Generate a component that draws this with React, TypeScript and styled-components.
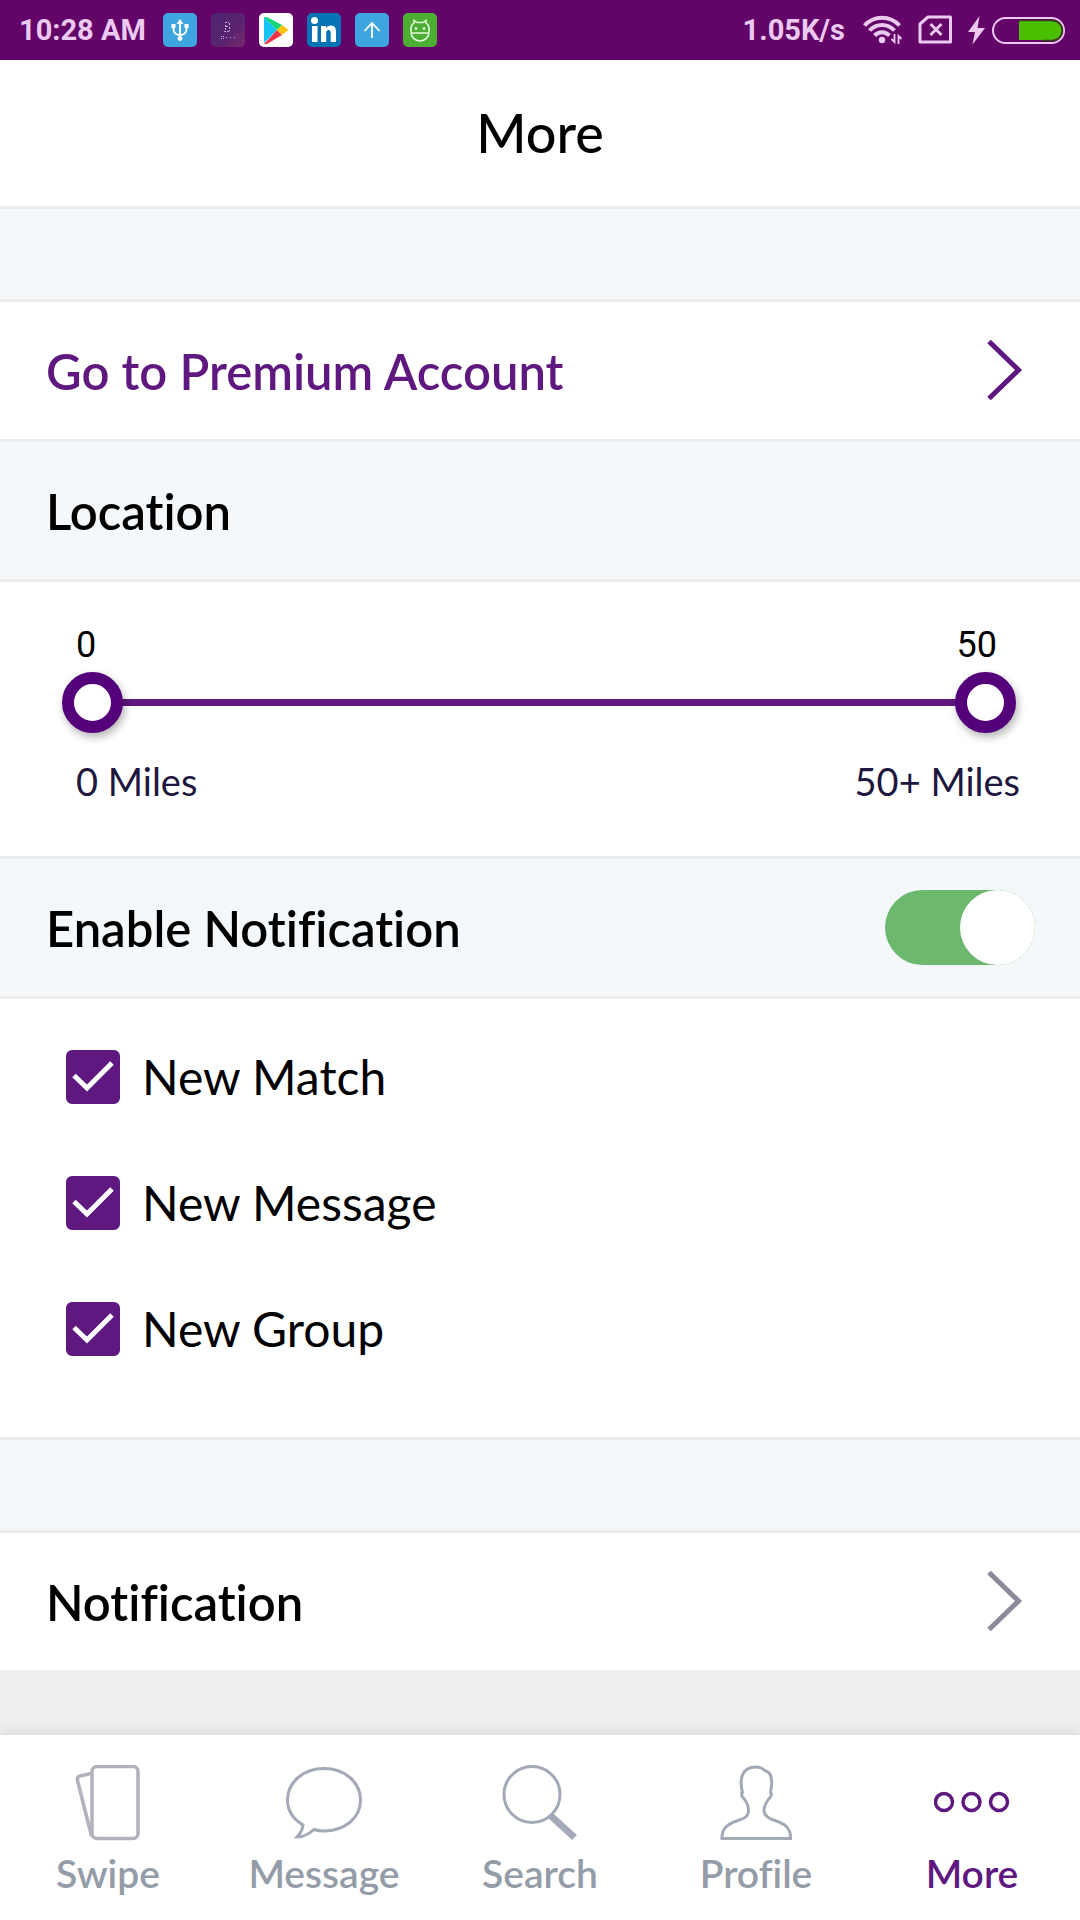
import React, { useState } from "react";
import styled, { createGlobalStyle } from "styled-components";

const color = {
  brand: "#5f187f",
  thumb: "#54007b",
  ink: "#000",
  navy: "#1d1740",
  muted: "#949ca8",
  icon: "#a3a9b6",
  line: "#ececec",
  band: "#f4f8fb",
  status: "#620468",
  statusInk: "#ecc9f0",
};

const GlobalStyle = createGlobalStyle`
  * { box-sizing: border-box; }
  body { margin: 0; background: #eee; }
  h1, h2 { margin: 0; font-weight: inherit; }
`;

const Screen = styled.div`
  display: flex;
  flex-direction: column;
  min-height: 100vh;
  background: #eee;
  color: ${color.ink};
  font-family: Lato, "Open Sans", sans-serif;
  font-size: 48px;
  font-variant-ligatures: none;
  line-height: 60px;
`;

/* Status bar */

const StatusBar = styled.div`
  display: flex;
  align-items: center;
  justify-content: space-between;
  height: 60px;
  padding: 0 15px 0 19px;
  background: ${color.status};
  color: ${color.statusInk};
  font: 700 29px/36px Roboto, sans-serif;
`;

const StatusGroup = styled.div<{ $gap: number }>`
  display: flex;
  align-items: center;
  gap: ${(p) => p.$gap}px;
`;

const StatusText = styled.span`
  margin-right: 3px;
`;

const AppBadge = styled.svg`
  display: block;
  width: 34px;
  height: 34px;
  border-radius: 5px;
`;

const Glyph = styled.svg`
  display: block;
  flex: none;
`;

/* Page sections */

const TitleBar = styled.header`
  display: flex;
  align-items: center;
  justify-content: center;
  height: 149px;
  border-bottom: 3px solid ${color.line};
  background: #fff;
`;

const Title = styled.h1`
  font-size: 54px;
  font-weight: 500;
`;

const Main = styled.main`
  flex: 1;
`;

const Spacer = styled.div`
  height: 93px;
  border-bottom: 3px solid ${color.line};
  background: ${color.band};
`;

const LinkRow = styled.a<{ $tone: string; $line?: boolean }>`
  display: flex;
  align-items: center;
  justify-content: space-between;
  min-height: 137px;
  padding: 0 57px 0 46px;
  border-bottom: ${(p) => (p.$line ? `3px solid ${color.line}` : "0")};
  box-sizing: content-box;
  background: #fff;
  color: ${(p) => p.$tone};
  font-size: 49px;
  font-weight: 600;
  text-decoration: none;
`;

const Band = styled.div`
  display: flex;
  align-items: center;
  justify-content: space-between;
  height: 140px;
  padding: 0 45px 0 46px;
  border-bottom: 3px solid ${color.line};
  background: ${color.band};
  font-weight: 600;
`;

const BandTitle = styled.h2`
  font-size: 49px;
`;

const Panel = styled.section<{ $pad: string }>`
  padding: ${(p) => p.$pad};
  border-bottom: 3px solid ${color.line};
  background: #fff;
`;

/* Distance range */

const RangeValues = styled.div`
  display: flex;
  justify-content: space-between;
  padding: 0 19px 0 14px;
  font: 400 36px/42px Roboto, sans-serif;
`;

const RangeTrack = styled.div`
  display: grid;
  align-items: center;
  margin: 6px 0 24px;

  > * {
    grid-area: 1 / 1;
  }
`;

const RangeBar = styled.div`
  height: 7px;
  margin: 0 30px;
  background: ${color.brand};
`;

const RangeInput = styled.input`
  appearance: none;
  width: 100%;
  height: 61px;
  margin: 0;
  background: transparent;
  pointer-events: none;

  &::-webkit-slider-thumb {
    appearance: none;
    width: 61px;
    height: 61px;
    border: 12px solid ${color.thumb};
    border-radius: 50%;
    background: #fff;
    box-shadow: 2px 4px 8px rgba(0, 0, 0, 0.3);
    pointer-events: auto;
  }
`;

const RangeEnds = styled.div`
  display: flex;
  justify-content: space-between;
  padding: 0 0 0 14px;
  margin-right: -4px;
  color: ${color.navy};
  font-size: 38px;
  line-height: 48px;
`;

/* Switch */

const SwitchInput = styled.input`
  appearance: none;
  display: flex;
  width: 150px;
  height: 75px;
  margin: 0;
  border-radius: 38px;
  background: #c9ced4;

  &::before {
    content: "";
    width: 75px;
    height: 75px;
    border-radius: 50%;
    background: #fff;
  }

  &:checked {
    justify-content: flex-end;
    background: #6bb86e;
  }
`;

/* Check boxes */

const CheckRow = styled.label`
  display: flex;
  align-items: center;
  gap: 22px;
  height: 126px;
`;

const CheckBox = styled.span`
  display: grid;

  > * {
    grid-area: 1 / 1;
  }

  svg {
    pointer-events: none;
  }
`;

const CheckInput = styled.input`
  appearance: none;
  width: 54px;
  height: 54px;
  margin: 0;
  border: 3px solid ${color.brand};
  border-radius: 6px;

  &:checked {
    background: ${color.brand};
  }
`;

/* Bottom tabs */

const TabBar = styled.nav`
  display: grid;
  grid-template-columns: repeat(5, 1fr);
  padding: 30px 0 23px;
  background: #fff;
  box-shadow: 0 -2px 12px rgba(0, 0, 0, 0.1);
`;

const Tab = styled.a<{ $active?: boolean }>`
  display: flex;
  flex-direction: column;
  align-items: center;
  gap: 8px;
  color: ${(p) => (p.$active ? color.brand : color.muted)};
  font-size: 39px;
  font-weight: 600;
  line-height: 48px;
  text-decoration: none;
`;

const TabIcon = styled.svg<{ $active?: boolean }>`
  display: block;
  width: 76px;
  height: 76px;
  fill: none;
  stroke: ${(p) => (p.$active ? color.brand : color.icon)};
  stroke-width: 3;
`;

function Chevron({ stroke }: { stroke: string }) {
  return (
    <Glyph width="36" height="62" viewBox="0 0 36 62" fill="none" stroke={stroke} strokeWidth="5">
      <path d="M2 1.500L31.500 30L2 58.500" />
    </Glyph>
  );
}

function StatusApps() {
  return (
    <>
      <AppBadge viewBox="0 0 34 34">
        <rect width="34" height="34" fill="#3fa5e0" />
        <g fill="none" stroke="#fff" strokeWidth="2">
          <path d="M17 9v17M10.500 13v3c0 4 3 6 6.500 6s6.500-2 6.500-6v-3" />
        </g>
        <path d="M17 6l3.500 5h-7zM8.500 11h4v4h-4zM21.500 11h4v4h-4z" fill="#fff" />
        <circle cx="17" cy="25.500" r="2.400" fill="#fff" />
      </AppBadge>
      <AppBadge viewBox="0 0 34 34">
        <defs>
          <linearGradient id="devy" x1="0" y1="0" x2="1" y2="1">
            <stop offset="0" stopColor="#4b2672" />
            <stop offset="0.6" stopColor="#5a2370" />
            <stop offset="1" stopColor="#7c2a6c" />
          </linearGradient>
        </defs>
        <rect width="34" height="34" fill="url(#devy)" />
        <g fill="none" stroke="#c5a8d4" strokeWidth="1">
          <path d="M14 9.500h4M18.500 10v3M15 13.500h3M18.500 14v4M13 18.500h5M14.500 12v6" strokeDasharray="2 1" />
          <path d="M10 23.500h3M10 25.500h3M15 24.500h2M19 24.500h2M23 24.500h2" strokeDasharray="1 1" />
        </g>
      </AppBadge>
      <AppBadge viewBox="0 0 34 34">
        <rect width="34" height="34" fill="#fff" />
        <path d="M5 4v26l13-13z" fill="#12c4f5" />
        <path d="M5 4l13 13 5-5L8 4z" fill="#13d67a" />
        <path d="M5 31l13-14 5 5L8 31z" fill="#ee3448" />
        <path d="M23 12l6.500 5L23 22l-5-5z" fill="#fdc20c" />
      </AppBadge>
      <AppBadge viewBox="0 0 34 34">
        <rect width="34" height="34" fill="#0673b4" />
        <g fill="#fff">
          <circle cx="7.500" cy="7.500" r="3.500" />
          <path d="M5 13h5.500v16H5zM14 13h5v2.300c1-1.700 2.800-2.700 5-2.700 4 0 5 2.800 5 6.800V29h-5.300v-8.500c0-2-.3-3.500-2.100-3.500s-2.400 1.500-2.400 3.500V29H14z" />
        </g>
      </AppBadge>
      <AppBadge viewBox="0 0 34 34">
        <rect width="34" height="34" fill="#3fa5e0" />
        <path d="M17 25V10M9.500 18L17 10l7.500 8" fill="none" stroke="#fff" strokeWidth="1.800" />
      </AppBadge>
      <AppBadge viewBox="0 0 34 34">
        <rect width="34" height="34" fill="#4cae33" />
        <g fill="none" stroke="#e6f7df" strokeWidth="1.500">
          <path d="M8 19v-4c0-2 1.500-4 3-5V7.500l3 2h6l3-2V10c1.500 1 3 3 3 5v4c0 5-4 9-9 9s-9-4-9-9zM8 20h18" />
        </g>
        <circle cx="13" cy="15.500" r="1.300" fill="#fff" />
        <circle cx="21" cy="15.500" r="1.300" fill="#fff" />
      </AppBadge>
    </>
  );
}

function StatusSignals() {
  return (
    <>
      <Glyph width="40" height="30" viewBox="0 0 40 30" fill="none" stroke={color.statusInk} strokeWidth="4">
        <path d="M1.500 10.500C11 0 27 0 36.500 10.500M6.500 15.500c7-7.500 18-7.500 25 0M11.500 20.500c4.500-4.500 10.500-4.500 15 0" />
        <circle cx="19" cy="25" r="3.200" fill={color.statusInk} stroke="none" />
        <path d="M31.500 19v8l-3-3M35.500 29v-8l3 3" strokeWidth="1.800" />
      </Glyph>
      <Glyph width="35" height="30" viewBox="0 0 35 30" fill="none" stroke={color.statusInk} strokeWidth="3">
        <path d="M10 2h22.500v25H2V9z" strokeLinejoin="round" />
        <path d="M12.500 9l11 11M23.500 9l-11 11" />
      </Glyph>
      <StatusGroup $gap={7}>
        <Glyph width="17" height="30" viewBox="0 0 17 30" fill={color.statusInk}>
          <path d="M11.500 1L0 17h7L4.500 29.500 17 13H9.500z" />
        </Glyph>
        <Glyph width="73" height="27" viewBox="0 0 73 27">
          <rect x="1" y="1" width="71" height="25" rx="12.500" fill="none" stroke={color.statusInk} strokeWidth="2" />
          <path d="M27 4h33a9.500 9.500 0 0 1 0 19H27z" fill="#4ac000" />
          <path d="M27 3.500h33.500a10 10 0 0 1 0 20H50" fill="none" stroke="#344013" strokeWidth="1.500" />
        </Glyph>
      </StatusGroup>
    </>
  );
}

const tabs = [
  {
    name: "Swipe",
    art: (
      <g stroke="#b2b1bc" strokeWidth="3.500">
        <rect x="22" y="1.500" width="46" height="72" rx="5" />
        <path d="M21 8.500L10 11c-2 .5-3 2-2.500 4.500L21.500 71" />
      </g>
    ),
  },
  {
    name: "Message",
    art: (
      <path d="M17 60C7 54 1.500 45 1.500 35 1.500 17 17.500 3.500 38 3.500S74.500 17 74.500 35 58.500 66 38 66c-3.500 0-7-.5-10-1.500-5 4.500-10 7.500-17 7.500 3.500-3.500 5.500-7.500 6-12z" />
    ),
  },
  {
    name: "Search",
    art: (
      <>
        <circle cx="30" cy="29.500" r="28" />
        <path d="M49 51l23.500 21.500" strokeWidth="7" />
      </>
    ),
  },
  {
    name: "Profile",
    art: (
      <path d="M4 73.500c-.5-11 7-15 16-18 8-2.500 10.500-5 10.500-9.500 0-5-1-7.500-3.500-11-.5-1.500-3.500-2-3.500-6.500l1-1c-3-11-2-25.500 13-25.500 4 0 7 1 9 3.500 7 1.500 8.500 10 6 22l1 1c0 4.500-3 5-3.500 6.500-2.500 3.500-4 6-4 11 0 4.500 3 7 11 9.500 9 3 16 7 15.500 18z" />
    ),
  },
  {
    name: "More",
    active: true,
    art: (
      <g strokeWidth="3.500">
        <circle cx="10" cy="37" r="8.500" />
        <circle cx="37.500" cy="37" r="8.500" />
        <circle cx="65" cy="37" r="8.500" />
      </g>
    ),
  },
];

export default function App() {
  const [low, setLow] = useState(0);
  const [high, setHigh] = useState(50);

  return (
    <Screen>
      <GlobalStyle />
      <StatusBar>
        <StatusGroup $gap={14}>
          <StatusText>10:28 AM</StatusText>
          <StatusApps />
        </StatusGroup>
        <StatusGroup $gap={15}>
          <StatusText>1.05K/s</StatusText>
          <StatusSignals />
        </StatusGroup>
      </StatusBar>

      <TitleBar>
        <Title>More</Title>
      </TitleBar>

      <Main>
        <Spacer />
        <LinkRow href="#premium" $tone={color.brand} $line>
          Go to Premium Account
          <Chevron stroke={color.brand} />
        </LinkRow>

        <Band>
          <BandTitle>Location</BandTitle>
        </Band>
        <Panel $pad="42px 64px 51px 62px">
          <RangeValues>
            <output htmlFor="low">{low}</output>
            <output htmlFor="high">{high}</output>
          </RangeValues>
          <RangeTrack>
            <RangeBar />
            <RangeInput
              id="low"
              type="range"
              min={0}
              max={50}
              value={low}
              aria-label="Minimum distance"
              onChange={(e) => setLow(Math.min(Number(e.target.value), high))}
            />
            <RangeInput
              id="high"
              type="range"
              min={0}
              max={50}
              value={high}
              aria-label="Maximum distance"
              onChange={(e) => setHigh(Math.max(Number(e.target.value), low))}
            />
          </RangeTrack>
          <RangeEnds>
            <span>0 Miles</span>
            <span>50+ Miles</span>
          </RangeEnds>
        </Panel>

        <Band>
          <BandTitle>
            <label htmlFor="notify">Enable Notification</label>
          </BandTitle>
          <SwitchInput id="notify" type="checkbox" role="switch" defaultChecked />
        </Band>
        <Panel $pad="15px 66px 45px">
          {["New Match", "New Message", "New Group"].map((name) => (
            <CheckRow key={name}>
              <CheckBox>
                <CheckInput type="checkbox" defaultChecked />
                <Glyph width="54" height="54" viewBox="0 0 54 54" fill="none" stroke="#fff" strokeWidth="5">
                  <path d="M8 25.500L21 38L46 13" />
                </Glyph>
              </CheckBox>
              {name}
            </CheckRow>
          ))}
        </Panel>

        <Spacer />
        <LinkRow href="#notification" $tone={color.ink}>
          Notification
          <Chevron stroke="#8b8a9b" />
        </LinkRow>
      </Main>

      <TabBar>
        {tabs.map((t) => (
          <Tab key={t.name} href={`#${t.name.toLowerCase()}`} $active={t.active}>
            <TabIcon viewBox="0 0 76 76" $active={t.active}>
              {t.art}
            </TabIcon>
            {t.name}
          </Tab>
        ))}
      </TabBar>
    </Screen>
  );
}
